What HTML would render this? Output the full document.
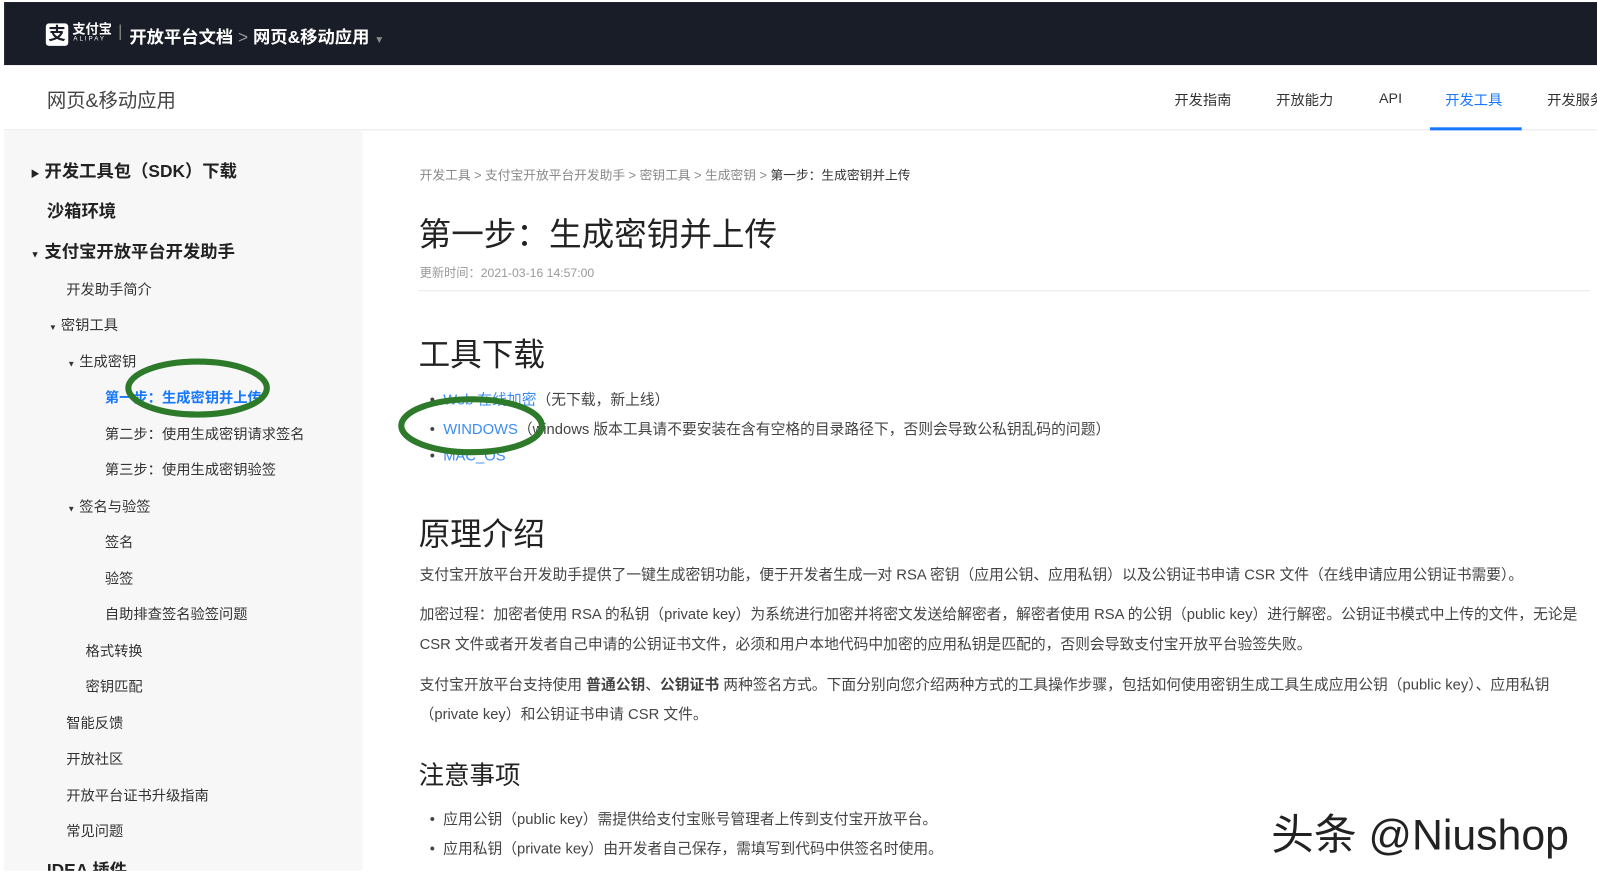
<!DOCTYPE html>
<html><head><meta charset="utf-8"><style>
*{margin:0;padding:0;box-sizing:border-box}
body{width:1597px;height:875px;background:#fff;position:relative;overflow:hidden;font-family:"Liberation Sans","Noto Sans CJK SC",sans-serif;color:#333}
#w{position:absolute;left:0;top:0;width:1568px;height:860px;transform:scale(1.0185);transform-origin:0 0}
.a{position:absolute;white-space:nowrap}
#top{position:absolute;left:4px;top:2px;width:1564px;height:62px;background:#191d28}
#sub{position:absolute;left:4px;top:64px;width:1564px;height:64px;background:#fff;border-bottom:1px solid #e8e8e8}
#side{position:absolute;left:4px;top:129px;width:352px;height:726px;background:#f7f7f7}
.s1{font-size:17px;font-weight:bold;color:#222}
.s2{font-size:14px;color:#333}
.nav{font-size:14px;color:#333;top:88px}
.p{font-size:14.5px;color:#444;left:412px}
.lk{color:#3b8cf5}
.li{font-size:14.5px;color:#444;left:422px}
</style></head><body><div id="w">
<div id="top"></div>
<div class="a" style="left:45px;top:23px;width:22px;height:22px;background:#fff;border-radius:3px;color:#191d28;font-size:17px;font-weight:bold;text-align:center;line-height:22px">支</div>
<div class="a" style="left:71px;top:22px;color:#fff;font-size:13px;font-weight:bold;line-height:13px">支付宝</div>
<div class="a" style="left:72px;top:36px;color:#fff;font-size:6px;letter-spacing:2px">ALIPAY</div>
<div class="a" style="left:116px;top:23px;color:#888;font-size:16px">|</div>
<div class="a" style="left:127px;top:22px;color:#fff;font-size:17px;font-weight:bold">开放平台文档 <span style="color:#999;font-weight:normal">&gt;</span> 网页&amp;移动应用 <span style="color:#888;font-size:10px">▼</span></div>
<div id="sub"></div>
<div class="a" style="left:46px;top:84px;font-size:19px;color:#444">网页&amp;移动应用</div>
<div class="a nav" style="left:1153px">开发指南</div>
<div class="a nav" style="left:1253px">开放能力</div>
<div class="a nav" style="left:1354px">API</div>
<div class="a nav" style="left:1419px;color:#1677ff">开发工具</div>
<div class="a" style="left:1404px;top:125px;width:90px;height:3px;background:#1677ff"></div>
<div class="a nav" style="left:1519px">开发服务</div>
<div id="side"></div>
<div class="a s1" style="left:30px;top:154px"><span style="font-size:9px">▶</span> 开发工具包（SDK）下载</div>
<div class="a s1" style="left:46px;top:193px">沙箱环境</div>
<div class="a s1" style="left:30px;top:233px"><span style="font-size:9px">▼</span> 支付宝开放平台开发助手</div>
<div class="a s2" style="left:65px;top:274px">开发助手简介</div>
<div class="a s2" style="left:48px;top:309px"><span style="font-size:8px">▼</span> 密钥工具</div>
<div class="a s2" style="left:66px;top:345px"><span style="font-size:8px">▼</span> 生成密钥</div>
<div class="a s2" style="left:103px;top:380px;color:#1677ff;font-weight:bold">第一步：生成密钥并上传</div>
<div class="a s2" style="left:103px;top:416px">第二步：使用生成密钥请求签名</div>
<div class="a s2" style="left:103px;top:451px">第三步：使用生成密钥验签</div>
<div class="a s2" style="left:66px;top:487px"><span style="font-size:8px">▼</span> 签名与验签</div>
<div class="a s2" style="left:103px;top:522px">签名</div>
<div class="a s2" style="left:103px;top:558px">验签</div>
<div class="a s2" style="left:103px;top:593px">自助排查签名验签问题</div>
<div class="a s2" style="left:84px;top:629px">格式转换</div>
<div class="a s2" style="left:84px;top:664px">密钥匹配</div>
<div class="a s2" style="left:65px;top:700px">智能反馈</div>
<div class="a s2" style="left:65px;top:735px">开放社区</div>
<div class="a s2" style="left:65px;top:771px">开放平台证书升级指南</div>
<div class="a s2" style="left:65px;top:806px">常见问题</div>
<div class="a s1" style="left:46px;top:840px">IDEA 插件</div>
<div class="a" style="left:0;top:855px;width:1568px;height:20px;background:#fff"></div>

<div class="a" style="left:412px;top:161px;font-size:12.5px;color:#888">开发工具 &gt; 支付宝开放平台开发助手 &gt; 密钥工具 &gt; 生成密钥 &gt; <span style="color:#333">第一步：生成密钥并上传</span></div>
<div class="a" style="left:411px;top:205px;font-size:32px;color:#222">第一步：生成密钥并上传</div>
<div class="a" style="left:412px;top:259px;font-size:12px;color:#999">更新时间：2021-03-16 14:57:00</div>
<div class="a" style="left:411px;top:285px;width:1150px;height:1px;background:#e8e8e8"></div>
<div class="a" style="left:411px;top:323px;font-size:31px;color:#222">工具下载</div>
<div class="a li" style="top:381px">•&nbsp;&nbsp;<span class="lk">Web 在线加密</span>（无下载，新上线）</div>
<div class="a li" style="top:410px">•&nbsp;&nbsp;<span class="lk">WINDOWS</span>（windows 版本工具请不要安装在含有空格的目录路径下，否则会导致公私钥乱码的问题）</div>
<div class="a li" style="top:440px">•&nbsp;&nbsp;<span class="lk">MAC_OS</span></div>
<div class="a" style="left:411px;top:499px;font-size:31px;color:#222">原理介绍</div>
<div class="a p" style="top:553px">支付宝开放平台开发助手提供了一键生成密钥功能，便于开发者生成一对 RSA 密钥（应用公钥、应用私钥）以及公钥证书申请 CSR 文件（在线申请应用公钥证书需要）。</div>
<div class="a p" style="top:592px">加密过程：加密者使用 RSA 的私钥（private key）为系统进行加密并将密文发送给解密者，解密者使用 RSA 的公钥（public key）进行解密。公钥证书模式中上传的文件，无论是</div>
<div class="a p" style="top:621px">CSR 文件或者开发者自己申请的公钥证书文件，必须和用户本地代码中加密的应用私钥是匹配的，否则会导致支付宝开放平台验签失败。</div>
<div class="a p" style="top:661px">支付宝开放平台支持使用 <b>普通公钥</b>、<b>公钥证书</b> 两种签名方式。下面分别向您介绍两种方式的工具操作步骤，包括如何使用密钥生成工具生成应用公钥（public key）、应用私钥</div>
<div class="a p" style="top:690px">（private key）和公钥证书申请 CSR 文件。</div>
<div class="a" style="left:411px;top:742px;font-size:25px;color:#222">注意事项</div>
<div class="a li" style="top:793px">•&nbsp;&nbsp;应用公钥（public key）需提供给支付宝账号管理者上传到支付宝开放平台。</div>
<div class="a li" style="top:822px">•&nbsp;&nbsp;应用私钥（private key）由开发者自己保存，需填写到代码中供签名时使用。</div>
<div class="a" style="left:1248px;top:786px;font-size:42px;color:#222">头条 @Niushop</div>
<svg class="a" style="left:0;top:0" width="1568" height="860">
<ellipse cx="194" cy="381" rx="68" ry="26" fill="none" stroke="#2d7a2a" stroke-width="6"/>
<ellipse cx="463" cy="418" rx="69" ry="26" fill="none" stroke="#2d7a2a" stroke-width="6"/>
</svg>
</div></body></html>
